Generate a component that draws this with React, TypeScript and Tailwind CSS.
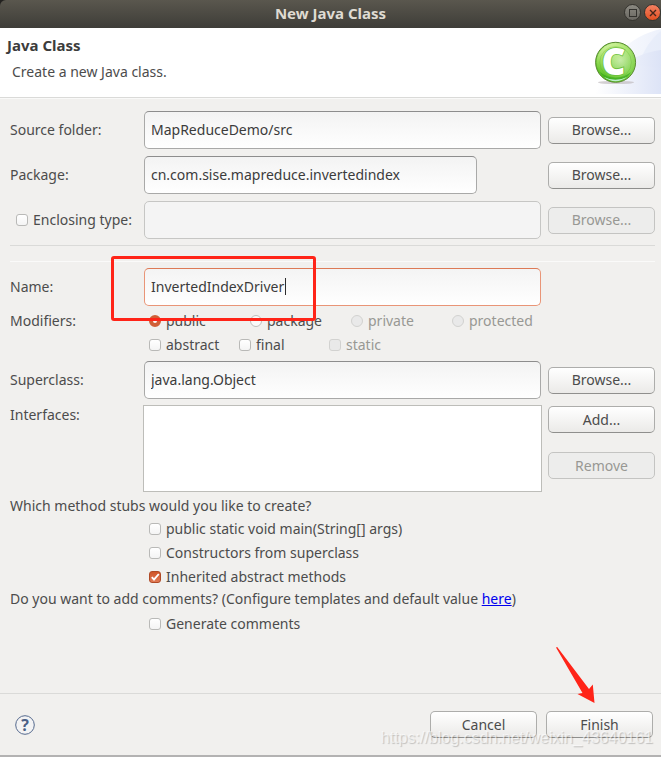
import React from "react";
import clsx from "clsx";

type FieldProps = {
  id: string;
  label: string;
  value?: string;
  disabled?: boolean;
  focused?: boolean;
};

function TextField({ id, label, value = "", disabled, focused }: FieldProps) {
  return (
    <input
      id={id}
      type="text"
      aria-label={label}
      defaultValue={value}
      disabled={disabled}
      className={clsx(
        "h-[38px] w-full rounded-[5px] border px-1.5 pb-0.5 text-[#3c3c3c] outline-none",
        disabled && "border-[#c6c6c4] bg-[#f4f4f4]",
        focused &&
          "border-[#e99577] border-t-[#dd7a56] bg-linear-to-b from-[#f4f4f4] to-white",
        !disabled &&
          !focused &&
          "border-[#a9a9a8] border-t-[#8d8d8d] bg-linear-to-b from-[#f3f3f3] to-white"
      )}
    />
  );
}

function Button({
  children,
  disabled,
}: {
  children: React.ReactNode;
  disabled?: boolean;
}) {
  return (
    <button
      type="button"
      disabled={disabled}
      className={clsx(
        "flex h-[27px] w-[107px] items-center justify-center rounded-[5px] border",
        disabled
          ? "border-[#c4c4c2] bg-[#ededec] text-[#989894]"
          : "border-[#adadab] border-b-[#8f8f8d] bg-linear-to-b from-white to-[#ebeae8] text-[#4c4c4c]"
      )}
    >
      {children}
    </button>
  );
}

function Check({
  label,
  checked,
  disabled,
}: {
  label: string;
  checked?: boolean;
  disabled?: boolean;
}) {
  return (
    <label
      className={clsx(
        "flex h-6 items-center gap-[5px] whitespace-nowrap",
        disabled && "text-[#989894]"
      )}
    >
      <span className="relative flex size-3 shrink-0">
        <input
          type="checkbox"
          defaultChecked={checked}
          disabled={disabled}
          className="peer size-3 appearance-none rounded-[3px] border border-[#b9b9b7] bg-linear-to-b from-white to-[#f4f4f4] checked:border-[#b04a26] checked:from-[#cf5527] checked:to-[#e07a55] disabled:border-[#d2d2d0] disabled:from-[#e9e9e9] disabled:to-[#e9e9e9]"
        />
        <svg
          viewBox="0 0 12 12"
          className="pointer-events-none absolute inset-0 hidden size-3 peer-checked:block"
        >
          <path
            d="M2.8 6.2 5 8.6 9.8 3"
            fill="none"
            stroke="#fff"
            strokeWidth="1.9"
          />
        </svg>
      </span>
      {label}
    </label>
  );
}

function Radio({
  label,
  checked,
  disabled,
}: {
  label: string;
  checked?: boolean;
  disabled?: boolean;
}) {
  return (
    <label
      className={clsx(
        "flex h-6 items-center gap-[5px] whitespace-nowrap",
        disabled && "text-[#989894]"
      )}
    >
      <input
        type="radio"
        name="modifier"
        defaultChecked={checked}
        disabled={disabled}
        className="size-3 shrink-0 appearance-none rounded-full border border-[#bfbfbd] bg-[#fafafa] checked:border-4 checked:border-[#d05f37] disabled:border-[#d2d2d0] disabled:bg-[#e9e9e9]"
      />
      {label}
    </label>
  );
}

function Banner() {
  return (
    <svg viewBox="0 0 66 66" className="h-[66px] w-[66px]" aria-hidden="true">
      <defs>
        <linearGradient id="sky" x1="0" x2="1">
          <stop offset="0" stopColor="#fff" />
          <stop offset="1" stopColor="#dbe2f6" />
        </linearGradient>
        <linearGradient id="skyLight" x1="0" x2="1">
          <stop offset="0" stopColor="#fff" />
          <stop offset="1" stopColor="#edf1fb" />
        </linearGradient>
        <radialGradient id="ball" cx="0.62" cy="0.45" r="0.6">
          <stop offset="0" stopColor="#d3f0c0" />
          <stop offset="0.6" stopColor="#8ad655" />
          <stop offset="1" stopColor="#4cba18" />
        </radialGradient>
        <linearGradient id="shine" x1="0" y1="0" x2="0.5" y2="1">
          <stop offset="0" stopColor="#f4ffcf" />
          <stop offset="0.45" stopColor="#d2f58a" stopOpacity="0.4" />
          <stop offset="1" stopColor="#3fae10" stopOpacity="0" />
        </linearGradient>
      </defs>
      <path d="M0 66C8 34 34 8 66 1V66Z" fill="url(#skyLight)" />
      <path d="M43 37C48 24 56 10 66 3V40Z" fill="#e3e9f8" opacity="0.6" />
      <path d="M0 66C18 40 38 26 66 22V66Z" fill="url(#sky)" opacity="0.9" />
      <ellipse cx="21" cy="54.5" rx="18" ry="1.6" fill="#b9b2b6" opacity="0.6" />
      <circle cx="20.6" cy="34.3" r="20" fill="url(#ball)" stroke="#5d8a35" />
      <circle cx="20.6" cy="34.3" r="19.2" fill="url(#shine)" />
      <path
        d="M5 44a18 18 0 0 0 31 0 24 24 0 0 1-31 0Z"
        fill="#2fa51c"
        opacity="0.6"
      />
      <path
        d="M9 49a18 18 0 0 0 23 0 26 26 0 0 1-23 0Z"
        fill="#c9f4dd"
        opacity="0.9"
      />
      <circle
        cx="20.6"
        cy="34.3"
        r="15.8"
        fill="none"
        stroke="#4fb11e"
        strokeOpacity="0.25"
      />
      <text
        x="18.500"
        y="46.500"
        textAnchor="middle"
        fontFamily="Open Sans"
        fontSize="37"
        fontWeight="800"
        fill="#fff"
        stroke="#6cc03c"
        strokeWidth="1.6"
        paintOrder="stroke"
      >
        C
      </text>
    </svg>
  );
}

const columns =
  "grid grid-cols-[127px_minmax(0,1fr)_107px] items-center gap-x-[7px]";

export default function App() {
  return (
    <div className="relative flex min-h-screen flex-col border-b-2 border-[#b3b2b2] bg-[#f1f0ee] font-['Noto_Sans','Open_Sans',sans-serif] text-[14px] leading-5 text-[#4c4c4c]">
      <div className="bg-[#22211f]">
        <header className="relative flex h-7 items-center justify-center rounded-tl-md bg-linear-to-b from-[#5a574e] to-[#3e3d38] pb-0.5">
          <h1 className="text-[15px] font-bold text-[#dfdbd2]">
            New Java Class
          </h1>
          <div className="absolute top-1 right-0 flex gap-[3px]">
            <button
              type="button"
              aria-label="Maximize"
              className="flex size-[17px] items-center justify-center rounded-full border border-[#35342f] bg-linear-to-b from-[#8b8981] to-[#6a6862]"
            >
              <span className="size-2 border border-[#33322e]" />
            </button>
            <button
              type="button"
              aria-label="Close"
              className="flex size-[17px] items-center justify-center rounded-full border border-[#35342f] bg-linear-to-b from-[#f38060] to-[#e2501f]"
            >
              <svg viewBox="0 0 8 8" className="size-2">
                <path
                  d="M1 1l6 6m0-6l-6 6"
                  stroke="#44261b"
                  strokeWidth="1.4"
                />
              </svg>
            </button>
          </div>
        </header>
      </div>

      <section className="flex h-[70px] justify-between border-b border-[#dadad8] bg-white">
        <div className="pt-[7px] pl-[7px]">
          <h2 className="text-[15px] leading-5 font-bold text-[#3c3c3c]">
            Java Class
          </h2>
          <p className="mt-[7px] pl-[5px]">Create a new Java class.</p>
        </div>
        <Banner />
      </section>

      <form className="grow border-t border-[#f9f9f8] pt-3 pr-1.5 pl-2.5">
        <div className={clsx(columns, "gap-y-[7px]")}>
          <label htmlFor="source">Source folder:</label>
          <TextField id="source" label="Source folder" value="MapReduceDemo/src" />
          <Button>Browse...</Button>

          <label htmlFor="package">Package:</label>
          <div className="mr-16">
            <TextField
              id="package"
              label="Package"
              value="cn.com.sise.mapreduce.invertedindex"
            />
          </div>
          <Button>Browse...</Button>

          <div className="pl-1.5">
            <Check label="Enclosing type:" />
          </div>
          <TextField id="enclosing" label="Enclosing type" disabled />
          <Button disabled>Browse...</Button>
        </div>

        <div className="mt-1.5 h-[17px] border-t border-b border-t-[#dadad8] border-b-[#fafaf9]" />

        <div className={clsx(columns, "mt-1.5")}>
          <label htmlFor="name">Name:</label>
          <div className="relative">
            <TextField id="name" label="Name" value="InvertedIndexDriver" focused />
            {/* text caret */}
            <span className="absolute top-[10px] left-[141px] h-[17px] w-px bg-[#2c2c2c]" />
            {/* highlight around the class name */}
            <span className="pointer-events-none absolute -top-3 -left-[33px] z-10 h-[65px] w-[205px] rounded-[3px] border-3 border-[#ff2418]" />
          </div>

          <span className="col-start-1 mt-[3px]">Modifiers:</span>
          <div className="mt-[3px] grid grid-cols-[repeat(4,101px)] pl-[5px]">
            <Radio label="public" checked />
            <Radio label="package" />
            <Radio label="private" disabled />
            <Radio label="protected" disabled />
          </div>
          <div className="col-start-2 grid grid-cols-[repeat(3,90px)] pl-[5px]">
            <Check label="abstract" />
            <Check label="final" />
            <Check label="static" disabled />
          </div>
        </div>

        <div className={clsx(columns, "mt-1 gap-y-1.5")}>
          <label htmlFor="superclass">Superclass:</label>
          <TextField id="superclass" label="Superclass" value="java.lang.Object" />
          <Button>Browse...</Button>

          <label htmlFor="interfaces" className="self-start">
            Interfaces:
          </label>
          <textarea
            id="interfaces"
            className="-mx-px block h-[87px] resize-none border border-[#bdbdb9] bg-white outline-none"
          />
          <div className="flex flex-col gap-[19px] self-start pt-px">
            <Button>Add...</Button>
            <Button disabled>Remove</Button>
          </div>
        </div>

        <fieldset className="mt-0.5">
          <legend className="h-[23px] leading-6">
            Which method stubs would you like to create?
          </legend>
          <div className="pl-[139px]">
            <Check label="public static void main(String[] args)" />
            <Check label="Constructors from superclass" />
            <Check label="Inherited abstract methods" checked />
          </div>
        </fieldset>
        <p className="h-[23px]">
          Do you want to add comments? (Configure templates and default value{" "}
          <a href="#templates" className="text-[#0000ee] underline">
            here
          </a>
          )
        </p>
        <div className="pl-[139px]">
          <Check label="Generate comments" />
        </div>
      </form>

      <footer className="relative flex h-[62px] items-center justify-between border-t border-[#dadad8] pr-2 pl-[15px]">
        <button type="button" aria-label="Help">
          <svg viewBox="0 0 20 20" className="size-5">
            <circle cx="10" cy="10" r="9.3" fill="#f3f3f4" stroke="#566a8e" />
            <text
              x="10"
              y="15.5"
              textAnchor="middle"
              fontFamily="Open Sans"
              fontSize="16"
              fontWeight="700"
              fill="#4b5f86"
            >
              ?
            </text>
          </svg>
        </button>
        <div className="flex gap-[9px]">
          <Button>Cancel</Button>
          <Button>Finish</Button>
        </div>
        <svg
          viewBox="0 0 40 57"
          className="pointer-events-none absolute -top-[47px] right-[65px] h-[57px] w-10"
          aria-hidden="true"
        >
          <path
            d="M0 .6 1.2 0 33 42 36.800 37.500 38.500 56 21.500 47 26.500 46Z"
            fill="#ff2418"
          />
        </svg>
        <span className="pointer-events-none absolute right-2 bottom-[7px] font-['Liberation_Sans',sans-serif] text-[16px] whitespace-nowrap text-white/60 [text-shadow:1px_1px_1px_rgba(0,0,0,0.2)]">
          https://blog.csdn.net/weixin_43640161
        </span>
      </footer>
    </div>
  );
}
